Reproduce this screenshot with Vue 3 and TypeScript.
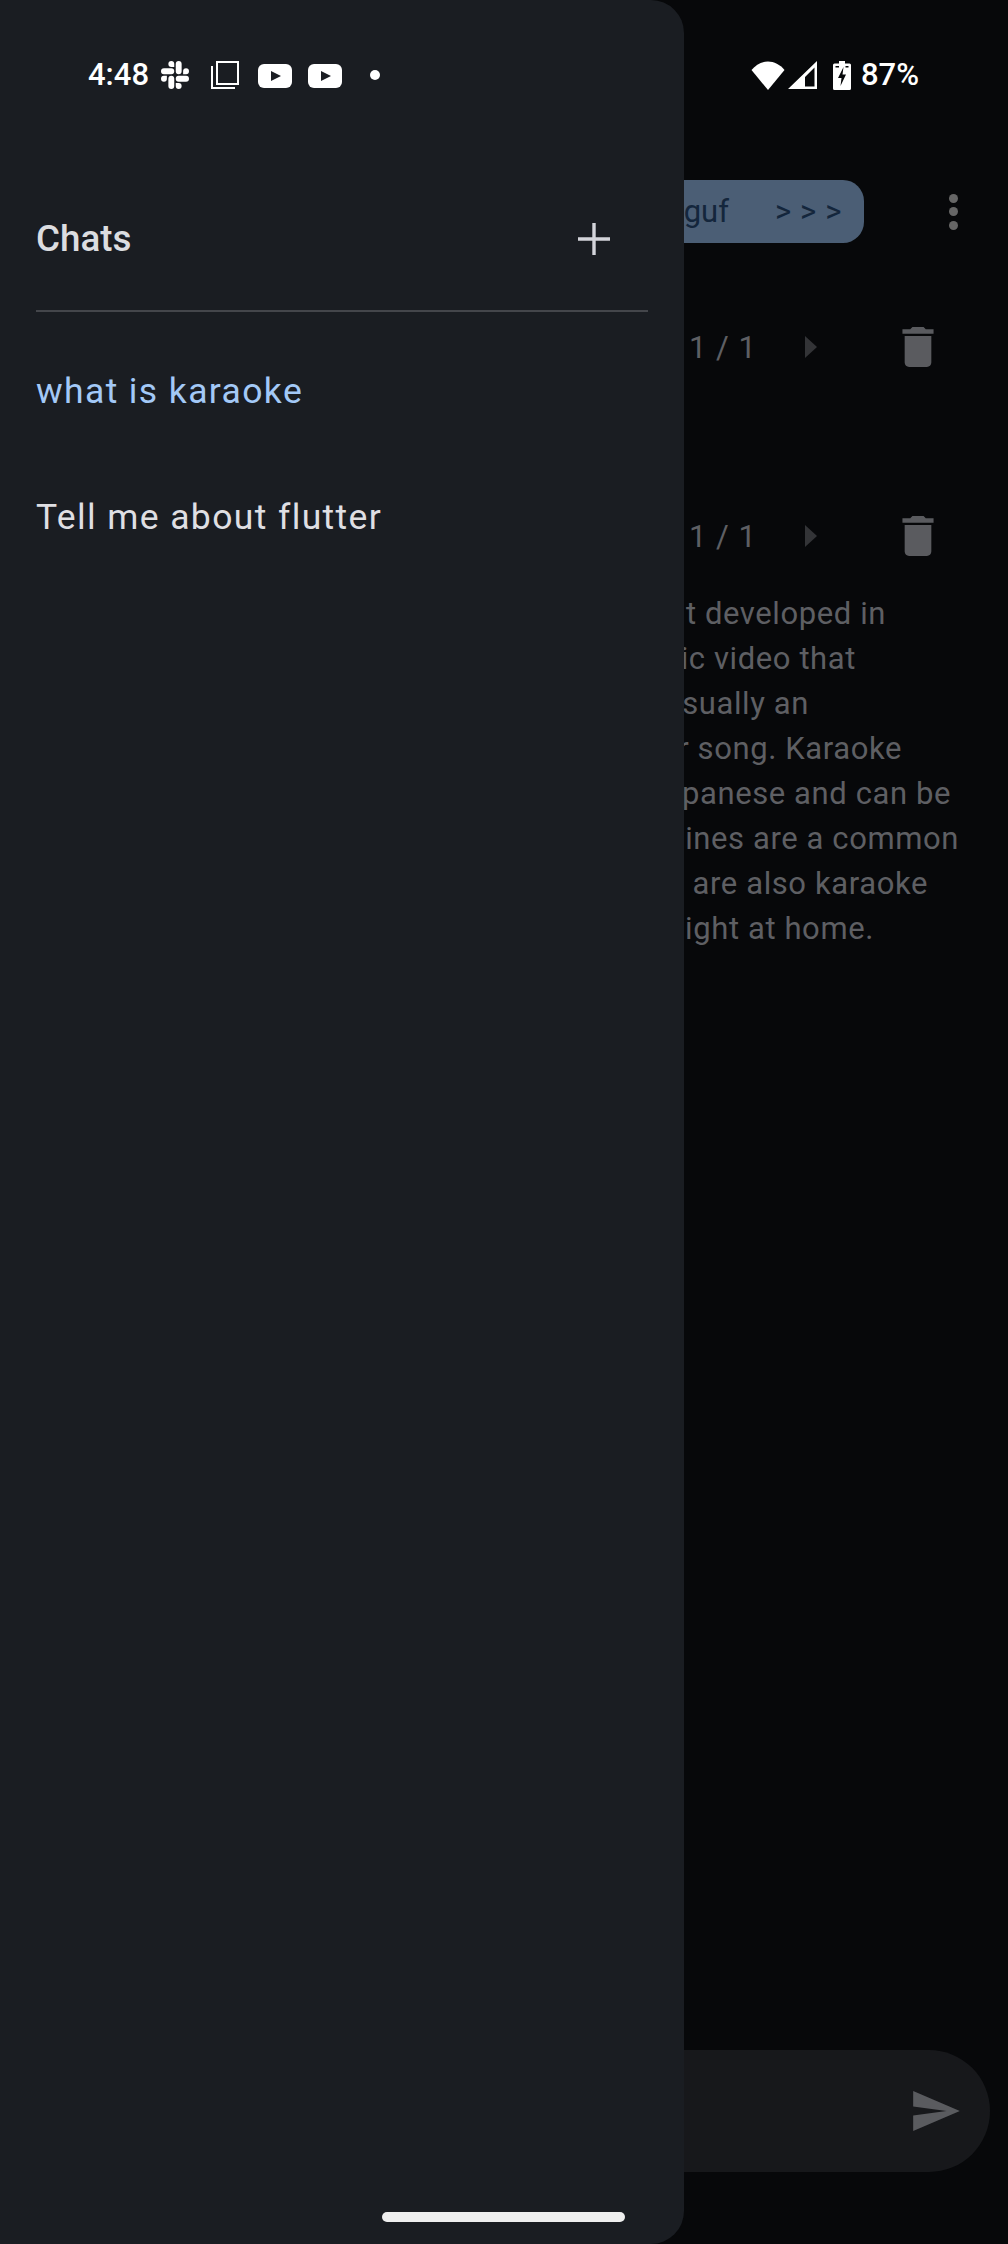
<script setup lang="ts">
interface AnswerLine {
  text: string;
  end: number;
}

const chats = [
  { id: 1, title: 'what is karaoke', active: true },
  { id: 2, title: 'Tell me about flutter', active: false },
];

// each line is right-aligned to where it ends in the reference, the start is under the drawer
const answer: AnswerLine[] = [
  { text: 'Karaoke is a form of entertainment developed in', end: 886 },
  { text: 'Japan. It uses a music video that', end: 856 },
  { text: 'shows the lyrics, usually an', end: 809 },
  { text: 'instrumental cover of a popular song. Karaoke', end: 902 },
  { text: 'means empty orchestra in Japanese and can be', end: 951 },
  { text: 'enjoyed anywhere. Machines are a common', end: 959 },
  { text: 'sight in bars and there are also karaoke', end: 928 },
  { text: 'apps for a fun night at home.', end: 874 },
];

const slack =
  'M5.042 15.165a2.528 2.528 0 0 1-2.52 2.523A2.528 2.528 0 0 1 0 15.165a2.527 2.527 0 0 1 2.522-2.52h2.52v2.52zM6.313 15.165a2.527 2.527 0 0 1 2.521-2.52 2.527 2.527 0 0 1 2.521 2.52v6.313A2.528 2.528 0 0 1 8.834 24a2.528 2.528 0 0 1-2.521-2.522v-6.313zM8.834 5.042a2.528 2.528 0 0 1-2.521-2.52A2.528 2.528 0 0 1 8.834 0a2.528 2.528 0 0 1 2.521 2.522v2.52H8.834zM8.834 6.313a2.528 2.528 0 0 1 2.521 2.521 2.528 2.528 0 0 1-2.521 2.521H2.522A2.528 2.528 0 0 1 0 8.834a2.528 2.528 0 0 1 2.522-2.521h6.312zM18.956 8.834a2.528 2.528 0 0 1 2.522-2.521A2.528 2.528 0 0 1 24 8.834a2.528 2.528 0 0 1-2.522 2.521h-2.522V8.834zM17.688 8.834a2.528 2.528 0 0 1-2.523 2.521 2.527 2.527 0 0 1-2.52-2.521V2.522A2.527 2.527 0 0 1 15.165 0a2.528 2.528 0 0 1 2.523 2.522v6.312zM15.165 18.956a2.528 2.528 0 0 1 2.523 2.522A2.528 2.528 0 0 1 15.165 24a2.527 2.527 0 0 1-2.52-2.522v-2.522h2.52zM15.165 17.688a2.527 2.527 0 0 1-2.52-2.523 2.526 2.526 0 0 1 2.52-2.52h6.313A2.527 2.527 0 0 1 24 15.165a2.528 2.528 0 0 1-2.522 2.523h-6.313z';
const trash = 'M6 19c0 1.1.9 2 2 2h8c1.1 0 2-.9 2-2V7H6v12zM19 4h-3.5l-1-1h-5l-1 1H5v2h14V4z';
</script>

<template>
  <div class="phone">
    <header class="status-bar">
      <div class="status-left">
        <span class="clock">4:48</span>
        <svg class="ic-slack" viewBox="0 0 24 24" fill="#fff"><path :d="slack" /></svg>
        <svg class="ic-copy" viewBox="0 0 28 28" fill="none" stroke="#fff" stroke-width="2">
          <rect x="6" y="1" width="21" height="22" />
          <path d="M1 5v22h23" />
        </svg>
        <svg class="ic-yt" viewBox="0 0 34 24">
          <rect width="34" height="24" rx="6" fill="#fff" />
          <path d="M13 7l10 5-10 5z" fill="#1a1d22" />
        </svg>
        <svg class="ic-yt second" viewBox="0 0 34 24">
          <rect width="34" height="24" rx="6" fill="#fff" />
          <path d="M13 7l10 5-10 5z" fill="#1a1d22" />
        </svg>
        <span class="dot"></span>
      </div>
      <div class="status-right">
        <svg class="ic-wifi" viewBox="0 0 34 29" fill="#fff">
          <path d="M17 29L0.5 9C5 3.5 11 0.5 17 0.5S29 3.5 33.5 9Z" />
        </svg>
        <svg class="ic-signal" viewBox="0 0 29 28" fill="#fff">
          <path fill-rule="evenodd" d="M29 0V28H0ZM26.5 6.5L17 16V25.5H26.5Z" />
        </svg>
        <svg class="ic-battery" viewBox="0 0 18 29" fill="#fff">
          <path
            fill-rule="evenodd"
            d="M6 0H12V2.5H16.5A1.5 1.5 0 0 1 18 4V27.5A1.5 1.5 0 0 1 16.5 29H1.5A1.5 1.5 0 0 1 0 27.5V4A1.5 1.5 0 0 1 1.5 2.5H6ZM10.5 6L5 17H8.5L7.5 25L13 13.5H9.5ZM2.5 5H6V6.5H2.5ZM12.5 5H15.5V6.5H12.5Z"
          />
        </svg>
        <span class="battery-text">87%</span>
      </div>
    </header>

    <main class="chat">
      <div class="toolbar">
        <div class="model-pill">
          <span class="model-name">model.gguf</span>
          <span class="model-more">&gt; &gt; &gt;</span>
        </div>
        <div class="kebab"><i></i><i></i><i></i></div>
      </div>

      <div class="msg-meta">
        <span class="pager">1 / 1</span>
        <span class="next"></span>
        <svg class="ic-trash" viewBox="5 3 14 18" fill="#5a5b5f"><path :d="trash" /></svg>
      </div>
      <div class="msg-meta reply">
        <span class="pager">1 / 1</span>
        <span class="next"></span>
        <svg class="ic-trash" viewBox="5 3 14 18" fill="#5a5b5f"><path :d="trash" /></svg>
      </div>

      <div class="answer">
        <div
          v-for="line in answer"
          :key="line.end"
          class="answer-line"
          :style="{ width: line.end + 'px' }"
        >
          {{ line.text }}
        </div>
      </div>

      <div class="composer">
        <svg class="ic-send" viewBox="2 3 21 18" fill="#5a5b5f">
          <path d="M2.01 21L23 12 2.01 3 2 10l15 2-15 2z" />
        </svg>
      </div>
    </main>

    <aside class="drawer">
      <div class="drawer-head">
        <span class="drawer-title">Chats</span>
        <svg class="ic-plus" viewBox="0 0 32 32" fill="none" stroke="#d3d4da" stroke-width="3.4">
          <path d="M16 0V32M0 16H32" />
        </svg>
      </div>
      <div class="divider"></div>
      <div class="chat-list">
        <div
          v-for="chat in chats"
          :key="chat.id"
          class="chat-item"
          :class="{ active: chat.active }"
        >
          {{ chat.title }}
        </div>
      </div>
    </aside>

    <div class="home-bar"></div>
  </div>
</template>

<style scoped>
.phone {
  position: relative;
  width: 1008px;
  height: 2244px;
  overflow: hidden;
  background: #07080a;
  font-family: Roboto, "Liberation Sans", sans-serif;
  display: flex;
  flex-direction: column;
}

.status-bar {
  position: relative;
  z-index: 2;
  flex: none;
  height: 150px;
  padding: 60px 89px 0 88px;
  box-sizing: border-box;
  display: flex;
  justify-content: space-between;
  align-items: flex-start;
  color: #fff;
}

.status-left,
.status-right {
  display: flex;
  align-items: center;
  height: 30px;
}

.clock {
  font-size: 31px;
  font-weight: 500;
  line-height: 30px;
  width: 73px;
}

.ic-slack {
  width: 28px;
  height: 28px;
  margin-right: 22px;
}

.ic-copy {
  width: 28px;
  height: 28px;
  margin-right: 19px;
}

.ic-yt {
  width: 34px;
  height: 24px;
  margin-top: 1px;
}

.ic-yt.second {
  margin-left: 16px;
}

.dot {
  width: 10px;
  height: 10px;
  border-radius: 50%;
  background: #fff;
  margin-left: 28px;
}

.ic-wifi {
  width: 34px;
  height: 29px;
  margin-right: 3px;
}

.ic-signal {
  width: 29px;
  height: 28px;
  margin-right: 16px;
}

.ic-battery {
  width: 18px;
  height: 29px;
  margin-right: 10px;
}

.battery-text {
  font-size: 31px;
  line-height: 30px;
  font-weight: 500;
}

.chat {
  flex: 1;
  display: flex;
  flex-direction: column;
  min-height: 0;
}

.toolbar {
  display: flex;
  align-items: center;
  height: 63px;
  margin-top: 30px;
}

.model-pill {
  width: 864px;
  height: 63px;
  box-sizing: border-box;
  background: #4b5e75;
  border-radius: 0 21px 21px 0;
  display: flex;
  justify-content: flex-end;
  align-items: center;
  padding-right: 22px;
  color: #14263c;
  font-size: 31px;
  white-space: nowrap;
}

.model-name {
  margin-right: 46px;
}

.model-more {
  letter-spacing: 0.6px;
}

.kebab {
  margin-left: 85px;
  display: flex;
  flex-direction: column;
  gap: 4.5px;
}

.kebab i {
  display: block;
  width: 9px;
  height: 9px;
  border-radius: 50%;
  background: #666;
}

.msg-meta {
  display: flex;
  align-items: center;
  height: 40px;
  margin-top: 84px;
  margin-left: 689px;
  color: #5e5f63;
}

.msg-meta.reply {
  margin-top: 149px;
}

.pager {
  width: 116px;
  font-size: 31px;
  letter-spacing: 1px;
  white-space: nowrap;
}

.next {
  width: 0;
  height: 0;
  border-left: 12px solid #333437;
  border-top: 11px solid transparent;
  border-bottom: 11px solid transparent;
}

.ic-trash {
  width: 32px;
  height: 40px;
  margin-left: 85px;
}

.answer {
  margin-top: 35px;
  color: #5e5f63;
  font-size: 31px;
  line-height: 45px;
  letter-spacing: 0.6px;
}

.answer-line {
  text-align: right;
  white-space: nowrap;
}

.composer {
  margin-top: auto;
  margin-bottom: 72px;
  width: 990px;
  height: 122px;
  box-sizing: border-box;
  background: #17181b;
  border-radius: 0 61px 61px 0;
  display: flex;
  justify-content: flex-end;
  align-items: center;
  padding-right: 30px;
}

.ic-send {
  width: 47px;
  height: 40px;
}

.drawer {
  position: absolute;
  z-index: 1;
  top: 0;
  bottom: 0;
  left: 0;
  width: 684px;
  box-sizing: border-box;
  padding-top: 214px;
  background: #1a1d22;
  border-radius: 0 33px 33px 0;
}

.drawer-head {
  display: flex;
  justify-content: space-between;
  align-items: center;
  height: 48px;
  padding: 0 74px 0 36px;
}

.drawer-title {
  font-size: 36.75px;
  font-weight: 500;
  color: #dcdde0;
}

.ic-plus {
  width: 32px;
  height: 32px;
  margin-top: 2px;
}

.divider {
  height: 2px;
  margin: 48px 36px 0;
  background: #44464b;
}

.chat-list {
  margin-top: 16px;
}

.chat-item {
  margin: 0 36px;
  height: 126px;
  line-height: 126px;
  font-size: 35.5px;
  letter-spacing: 1.38px;
  color: #dfdfe3;
  white-space: nowrap;
}

.chat-item.active {
  color: #a3c9f7;
}

.home-bar {
  position: absolute;
  z-index: 2;
  left: 382px;
  top: 2212px;
  width: 243px;
  height: 10px;
  border-radius: 5px;
  background: #efefef;
}
</style>
